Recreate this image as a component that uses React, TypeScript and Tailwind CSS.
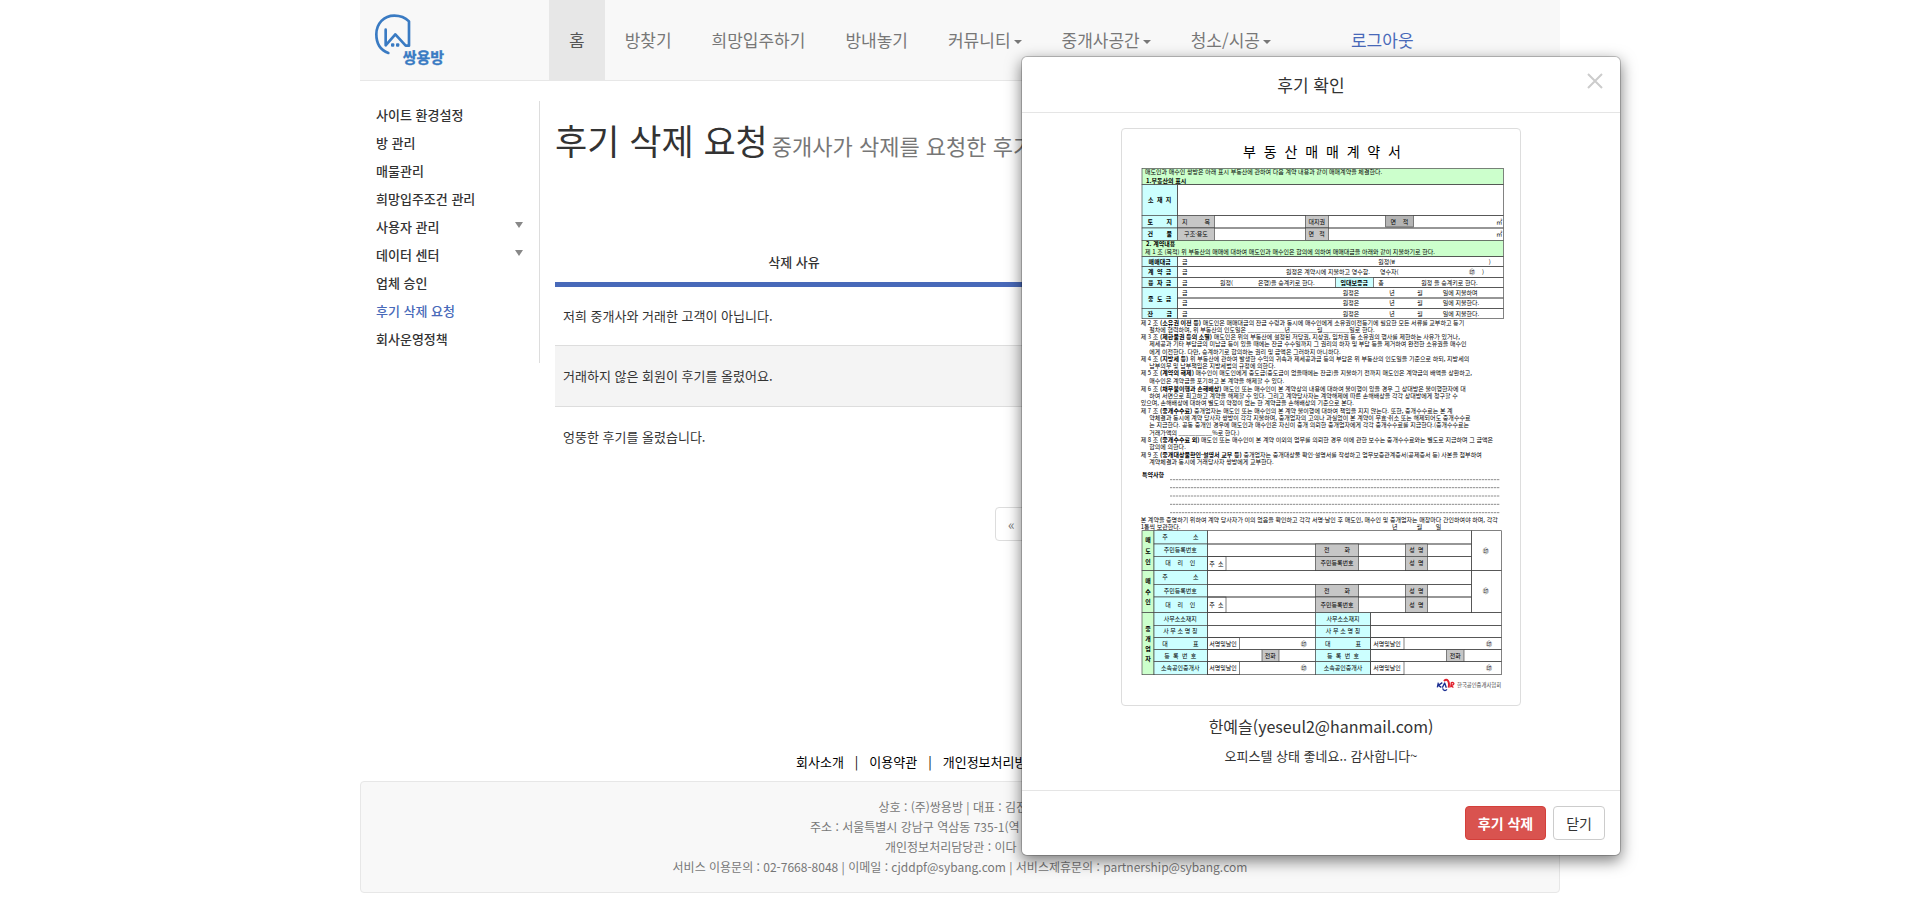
import React from "react";

type MenuEntry = { label: string; caret?: boolean; active?: boolean };

const NAV: MenuEntry[] = [
  { label: "홈", active: true },
  { label: "방찾기" },
  { label: "희망입주하기" },
  { label: "방내놓기" },
  { label: "커뮤니티", caret: true },
  { label: "중개사공간", caret: true },
  { label: "청소/시공", caret: true },
];

const SIDE: MenuEntry[] = [
  { label: "사이트 환경설정" },
  { label: "방 관리" },
  { label: "매물관리" },
  { label: "희망입주조건 관리" },
  { label: "사용자 관리", caret: true },
  { label: "데이터 센터", caret: true },
  { label: "업체 승인" },
  { label: "후기 삭제 요청", active: true },
  { label: "회사운영정책" },
];

const REASONS = [
  "저희 중개사와 거래한 고객이 아닙니다.",
  "거래하지 않은 회원이 후기를 올렸어요.",
  "엉뚱한 후기를 올렸습니다.",
];

function Logo() {
  return (
    <svg viewBox="45 43 213 171" className="block h-[57px] w-[71px]" role="img" aria-label="쌍용방">
      <g fill="none" stroke="#3a7bc3" strokeWidth="8" strokeLinecap="round" strokeLinejoin="round">
        <path d="M85 160C62 152 49 132 49 104C49 71 72 48 103 48C121 48 136 54 147 65V138H137L106 104L77 137V90" />
      </g>
      <g fill="#3a7bc3">
        <rect x="93" y="131" width="10" height="10" rx="3" />
        <rect x="108" y="131" width="10" height="10" rx="3" />
        <text x="128" y="189" fontSize="45" fontWeight="700" stroke="#3a7bc3" strokeWidth="1">쌍용방</text>
      </g>
    </svg>
  );
}

/* ---------- contract drawing ---------- */

const GREEN = "#ccffcc";
const CYAN = "#ccffff";
const GRAY = "#c6c6c6";

type Box = [number, number, number, number, string];

const BOXES: Box[] = [
  [66, 130, 1150, 179, GREEN],
  [66, 179, 172, 271, CYAN],
  [172, 179, 1150, 271, "none"],
  [66, 271, 172, 309, CYAN],
  [172, 271, 1150, 309, "none"],
  [172, 271, 283, 309, GRAY],
  [556, 271, 625, 309, GRAY],
  [797, 271, 880, 306, "#b4b4b4"],
  [66, 309, 172, 346, CYAN],
  [172, 309, 1150, 346, "none"],
  [172, 309, 283, 346, GRAY],
  [556, 309, 625, 346, GRAY],
  [66, 346, 1150, 395, GREEN],
  [66, 395, 172, 425, CYAN],
  [172, 395, 1150, 425, "none"],
  [66, 425, 172, 457, CYAN],
  [172, 425, 1150, 457, "none"],
  [66, 457, 172, 488, CYAN],
  [172, 457, 1150, 488, "none"],
  [647, 457, 760, 488, CYAN],
  [66, 488, 172, 550, CYAN],
  [172, 488, 1150, 519, "none"],
  [172, 519, 1150, 550, "none"],
  [66, 550, 172, 581, CYAN],
  [172, 550, 1150, 581, "none"],
  [66, 1217, 102, 1337, GREEN],
  [66, 1337, 102, 1463, GREEN],
  [66, 1463, 102, 1649, GREEN],
  [1054, 1217, 1144, 1337, "none"],
  [1054, 1337, 1144, 1463, "none"],
];

for (const ys of [[1217, 1257, 1294, 1337], [1337, 1378, 1416, 1463]]) {
  for (let i = 0; i < 3; i++) {
    BOXES.push([102, ys[i], 262, ys[i + 1], CYAN], [262, ys[i], 1054, ys[i + 1], "none"]);
    if (i > 0) {
      BOXES.push([586, ys[i], 716, ys[i + 1], GRAY], [856, ys[i], 922, ys[i + 1], GRAY]);
    }
  }
  BOXES.push([262, ys[2], 318, ys[3], "none"]);
}

const AGENT_ROWS = [1463, 1501, 1538, 1574, 1610, 1649];
for (let i = 0; i < 5; i++) {
  const a = AGENT_ROWS[i];
  const b = AGENT_ROWS[i + 1];
  BOXES.push([102, a, 262, b, CYAN], [262, a, 586, b, "none"], [586, a, 752, b, CYAN], [752, a, 1144, b, "none"]);
  if (i === 2 || i === 4) BOXES.push([262, a, 358, b, "none"], [752, a, 852, b, "none"]);
  if (i === 3) BOXES.push([426, a, 477, b, GRAY], [980, a, 1032, b, GRAY]);
}

/* x, vertical centre, text */
type Note = [number, number, string];

const BOLD_CENTER: Note[] = [
  [119, 225, "소  재  지"],
  [119, 290, "토        지"],
  [119, 327, "건        물"],
  [119, 410, "매매대금"],
  [119, 441, "계  약  금"],
  [119, 473, "융  자  금"],
  [119, 520, "중  도  금"],
  [119, 566, "잔        금"],
  [703, 473, "임대보증금"],
  [84, 1245, "매"], [84, 1277, "도"], [84, 1310, "인"],
  [84, 1367, "매"], [84, 1400, "수"], [84, 1431, "인"],
  [84, 1510, "중"], [84, 1540, "개"], [84, 1571, "업"], [84, 1602, "자"],
];

const CENTER: Note[] = [
  [228, 290, "지          목"],
  [228, 327, "구조·용도"],
  [590, 290, "대지권"],
  [590, 327, "면   적"],
  [838, 290, "면    적"],
  [1138, 290, "㎡"],
  [1138, 327, "㎡"],
  [181, 1237, "주               소"],
  [181, 1276, "주민등록번호"],
  [181, 1315, "대    리    인"],
  [289, 1316, "주  소"],
  [651, 1276, "전         화"],
  [651, 1315, "주민등록번호"],
  [889, 1276, "성  명"],
  [889, 1315, "성  명"],
  [1097, 1277, "㊞"],
  [181, 1357, "주               소"],
  [181, 1398, "주민등록번호"],
  [181, 1440, "대    리    인"],
  [289, 1440, "주  소"],
  [651, 1398, "전         화"],
  [651, 1440, "주민등록번호"],
  [889, 1398, "성  명"],
  [889, 1440, "성  명"],
  [1097, 1399, "㊞"],
];
for (const [x, sign, stamp, tel] of [[181, 309, 551, 451], [669, 801, 1107, 1006]]) {
  CENTER.push(
    [x, 1482, "사무소소재지"],
    [x, 1519, "사 무 소 명 칭"],
    [x, 1556, "대               표"],
    [x, 1593, "등  록  번  호"],
    [x, 1629, "소속공인중개사"],
    [sign, 1557, "서명및날인"],
    [sign, 1630, "서명및날인"],
    [stamp, 1556, "㊞"],
    [stamp, 1629, "㊞"],
    [tel, 1593, "전화"],
  );
}

const LEFT: Note[] = [
  [75, 142, "매도인과 매수인 쌍방은 아래 표시 부동산에 관하여 다음 계약 내용과 같이 매매계약을 체결한다."],
  [75, 382, "제 1 조 (목적) 위 부동산의 매매에 대하여 매도인과 매수인은 합의에 의하여 매매대금을 아래와 같이 지불하기로 한다."],
  [186, 410, "금"], [775, 410, "원정(₩"], [1106, 410, ")"],
  [186, 441, "금"], [498, 441, "원정은 계약시에 지불하고 영수함."], [780, 441, "영수자("], [1047, 441, "㊞"], [1086, 441, ")"],
  [186, 473, "금"], [300, 473, "원정("], [414, 473, "은행)을 승계키로 한다."], [775, 473, "총"], [904, 473, "원정 을 승계키로 한다."],
  [186, 503, "금"], [668, 503, "원정은"], [808, 503, "년"], [892, 503, "월"], [968, 503, "일에 지불하며"],
  [186, 535, "금"], [668, 535, "원정은"], [808, 535, "년"], [892, 535, "월"], [968, 535, "일에 지불한다."],
  [186, 566, "금"], [668, 566, "원정은"], [808, 566, "년"], [892, 566, "월"], [968, 566, "일에 지불한다."],
  [88, 614, "절차에 협력하며, 위 부동산의 인도일은 ___________년________월________일로 한다."],
  [88, 658, "제세공과 기타 부담금의 미납금 등이 있을 때에는 잔금 수수일까지 그 권리의 하자 및 부담 등을 제거하여 완전한 소유권을 매수인"],
  [88, 680, "에게 이전한다. 다만, 승계하기로 합의하는 권리 및 금액은 그러하지 아니하다."],
  [88, 723, "납부의무 및 납부책임은 지방세법의 규정에 의한다."],
  [88, 768, "매수인은 계약금을 포기하고 본 계약을 해제할 수 있다."],
  [88, 813, "하여 서면으로 최고하고 계약을 해제할 수 있다. 그리고 계약당사자는 계약해제에 따른 손해배상을 각각 상대방에게 청구할 수"],
  [62, 835, "있으며, 손해배상에 대하여 별도의 약정이 없는 한 계약금을 손해배상의 기준으로 본다."],
  [88, 879, "약체결과 동시에 계약 당사자 쌍방이 각각 지불하며, 중개업자의 고의나 과실없이 본 계약이 무효·취소 또는 해제되어도 중개수수료"],
  [88, 901, "는 지급한다. 공동 중개인 경우에 매도인과 매수인은 자신이 중개 의뢰한 중개업자에게 각각 중개수수료를 지급한다.(중개수수료는"],
  [88, 923, "거래가액의 __________%로 한다.)"],
  [88, 967, "합의에 의한다."],
  [88, 1011, "계약체결과 동시에 거래당사자 쌍방에게 교부한다."],
  [62, 1186, "본 계약을 증명하기 위하여 계약 당사자가 이의 없음을 확인하고 각각 서명·날인 후 매도인, 매수인 및 중개업자는 매장마다 간인하여야 하며, 각각"],
  [62, 1206, "1통씩 보관한다."],
  [816, 1206, "년"], [890, 1206, "월"], [947, 1206, "일"],
];

/* vertical centre, number, clause title, body */
const CLAUSES: [number, string, string, string][] = [
  [593, "제 2 조 ", "(소유권 이전 등)", " 매도인은 매매대금의 잔금 수령과 동시에 매수인에게 소유권이전등기에 필요한 모든 서류를 교부하고 등기"],
  [635, "제 3 조 ", "(제한물권 등의 소멸)", " 매도인은 위의 부동산에 설정된 저당권, 지상권, 임차권 등 소유권의 행사를 제한하는 사유가 있거나,"],
  [703, "제 4 조 ", "(지방세 등)", " 위 부동산에 관하여 발생한 수익의 귀속과 제세공과금 등의 부담은 위 부동산의 인도일을 기준으로 하되, 지방세의"],
  [745, "제 5 조 ", "(계약의 해제)", " 매수인이 매도인에게 중도금(중도금이 없을때에는 잔금)을 지불하기 전까지 매도인은 계약금의 배액을 상환하고,"],
  [791, "제 6 조 ", "(채무불이행과 손해배상)", " 매도인 또는 매수인이 본 계약상의 내용에 대하여 불이행이 있을 경우 그 상대방은 불이행한자에 대"],
  [857, "제 7 조 ", "(중개수수료)", " 중개업자는 매도인 또는 매수인의 본 계약 불이행에 대하여 책임을 지지 않는다. 또한, 중개수수료는 본 계"],
  [945, "제 8 조 ", "(중개수수료 외)", " 매도인 또는 매수인이 본 계약 이외의 업무를 의뢰한 경우 이에 관한 보수는 중개수수료와는 별도로 지급하며 그 금액은"],
  [989, "제 9 조 ", "(중개대상물확인·설명서 교부 등)", " 중개업자는 중개대상물 확인·설명서를 작성하고 업무보증관계증서(공제증서 등) 사본을 첨부하여"],
];

const RULES = [1064, 1088, 1113, 1138, 1163];

function Contract() {
  return (
    <svg
      viewBox="18 24 1170 1704"
      className="block h-auto w-full"
      role="img"
      aria-label="부동산매매계약서"
      fontSize="18"
      fill="#000"
    >
      <text x="606" y="96" fontSize="42" textAnchor="middle" className="whitespace-pre">
        {"부  동  산  매  매  계  약  서"}
      </text>
      {BOXES.map(([x1, y1, x2, y2, fill], i) => (
        <rect key={i} x={x1} y={y1} width={x2 - x1} height={y2 - y1} fill={fill} stroke="#444" strokeWidth="2" />
      ))}
      {BOLD_CENTER.map(([x, y, t], i) => (
        <text key={i} x={x} y={y + 7} fontWeight="700" textAnchor="middle" className="whitespace-pre">{t}</text>
      ))}
      {CENTER.map(([x, y, t], i) => (
        <text key={i} x={x} y={y + 6} textAnchor="middle" className="whitespace-pre">{t}</text>
      ))}
      {LEFT.map(([x, y, t], i) => (
        <text key={i} x={x} y={y + 6} className="whitespace-pre">{t}</text>
      ))}
      {CLAUSES.map(([y, no, title, body]) => (
        <text key={y} x="62" y={y + 6} className="whitespace-pre">
          {no}
          <tspan fontWeight="700">{title}</tspan>
          {body}
        </text>
      ))}
      <g fontWeight="700">
        <text x="78" y="174">1.부동산의 표시</text>
        <text x="78" y="364">2. 계약내용</text>
        <text x="66" y="1056">특약사항</text>
      </g>
      {RULES.map((y) => (
        <path key={y} d={`M150 ${y}H1140`} stroke="#555" strokeWidth="2" strokeDasharray="7 2" />
      ))}
      <g fill="none" strokeLinejoin="round">
        <path d="M955 1673L952 1687M967 1673L955 1681L964 1687" stroke="#1c2f92" strokeWidth="4" />
        <path d="M967 1688L974 1674L979 1688M968 1690C970 1697 976 1699 981 1693" stroke="#1c2f92" strokeWidth="4" />
        <path d="M972 1668C980 1659 990 1667 986 1688" stroke="#e0202c" strokeWidth="6" />
        <path d="M992 1687L994 1673C1000 1671 1004 1675 1000 1679L994 1681L1000 1688" stroke="#e0202c" strokeWidth="4" />
      </g>
      <text x="1011" y="1687" fontSize="16" fill="#444">한국공인중개사협회</text>
    </svg>
  );
}

/* ---------- page ---------- */

function Header() {
  return (
    <header className="flex h-[81px] border-b border-[#e7e7e7] bg-[#f8f8f8]">
      <a href="#home" className="w-[189px] shrink-0 pt-[14px] pl-[15px]">
        <Logo />
      </a>
      <nav className="flex text-[17px] leading-5 text-[#777]">
        {NAV.map((n) => (
          <a
            key={n.label}
            href="#menu"
            className={
              n.active
                ? "flex items-center bg-[#e7e7e7] px-5 text-[#555]"
                : "flex items-center px-5"
            }
          >
            {n.label}
            {n.caret && (
              <svg viewBox="0 0 8 4" className="mt-1 ml-[3px] h-1 w-2" fill="#777" aria-hidden="true">
                <path d="M0 0H8L4 4Z" />
              </svg>
            )}
          </a>
        ))}
        <a href="#logout" className="ml-10 flex items-center px-5 text-[#4869b9]">로그아웃</a>
      </nav>
    </header>
  );
}

function Sidebar() {
  return (
    <aside className="h-[262px] w-[180px] shrink-0 border-r border-[#ddd] pl-4">
      <ul className="text-[13px] font-medium leading-7 text-[#333]">
        {SIDE.map((s) => (
          <li key={s.label}>
            <a href="#side" className={s.active ? "block text-[#4869b9]" : "flex items-center justify-between pr-4"}>
              {s.label}
              {s.caret && (
                <svg viewBox="0 0 8 6" className="mb-1 h-1.5 w-2" fill="#888" aria-hidden="true">
                  <path d="M0 0H8L4 6Z" />
                </svg>
              )}
            </a>
          </li>
        ))}
      </ul>
    </aside>
  );
}

function Reasons() {
  return (
    <main className="min-w-0 grow px-[15px] pt-[18px]">
      <h1 className="flex items-baseline gap-1 text-[35px] leading-[42px] whitespace-nowrap text-[#333]">
        후기 삭제 요청
        <small className="text-[22px] text-[#777]">중개사가 삭제를 요청한 후기</small>
      </h1>
      <table className="mt-20 w-full text-[13px] text-[#333]">
        <thead>
          <tr className="border-b-[5px] border-[#4869b9]">
            <th className="h-[38px] w-[478px] pb-1 font-medium">삭제 사유</th>
            <td />
          </tr>
        </thead>
        <tbody>
          {REASONS.map((r) => (
            <tr key={r} className="h-[61px] border-[#ddd] not-last:border-b even:bg-[#f4f4f4]">
              <td className="px-2">{r}</td>
              <td />
            </tr>
          ))}
        </tbody>
      </table>
      <div className="mx-auto mt-10 w-[110px]">
        <button type="button" aria-label="이전" className="h-[34px] rounded-l border border-[#ddd] bg-white px-3 text-sm text-[#777]">
          «
        </button>
      </div>
    </main>
  );
}

function Footer() {
  return (
    <footer>
      <div className="mx-auto flex w-[328px] gap-[11px] text-[13px] leading-5 whitespace-nowrap text-black">
        <a href="#about">회사소개</a>
        <span>|</span>
        <a href="#terms">이용약관</a>
        <span>|</span>
        <a href="#privacy">개인정보처리방</a>
      </div>
      <address className="mt-[9px] flex flex-col items-center rounded border border-[#e7e7e7] bg-[#f8f8f8] px-4 py-[15px] text-xs leading-5 whitespace-nowrap text-[#777] not-italic">
        <p className="w-[163px]">상호 : (주)쌍용방 | 대표 : 김진</p>
        <p className="w-[300px]">주소 : 서울특별시 강남구 역삼동 735-1(역</p>
        <p className="w-[150px]">개인정보처리담당관 : 이다</p>
        <p>서비스 이용문의 : 02-7668-8048 | 이메일 : cjddpf@sybang.com | 서비스제휴문의 : partnership@sybang.com</p>
      </address>
    </footer>
  );
}

function ReviewDialog() {
  return (
    <section
      role="dialog"
      aria-labelledby="review-title"
      className="absolute top-14 left-[661px] w-[600px] rounded-md border border-black/20 bg-white bg-clip-padding text-center text-[#333] shadow-[0_5px_15px_rgba(0,0,0,0.5)]"
    >
      <div className="flex border-b border-[#e5e5e5] p-[15px]">
        <h2 id="review-title" className="grow text-[17px] leading-[25px]">후기 확인</h2>
        <button type="button" aria-label="닫기" className="flex w-5 justify-center">
          <svg viewBox="0 0 16 18" className="h-[18px] w-4" fill="none" stroke="#ccc" strokeWidth="2" aria-hidden="true">
            <path d="M1 2L15 16M15 2L1 16" />
          </svg>
        </button>
      </div>
      <div className="px-[15px] pt-[15px] pb-6">
        <div className="mx-auto w-[400px] rounded border border-[#ddd] p-1">
          <Contract />
        </div>
        <p className="mt-2.5 text-base leading-5">한예슬(yeseul2@hanmail.com)</p>
        <p className="mt-2.5 text-[13px] leading-5">오피스텔 상태 좋네요.. 감사합니다~</p>
      </div>
      <div className="flex justify-end gap-[7px] border-t border-[#e5e5e5] p-[15px] text-sm leading-5">
        <button type="button" className="h-[34px] rounded border border-[#d43f3a] bg-[#d9534f] px-3 font-bold text-white">
          후기 삭제
        </button>
        <button type="button" className="h-[34px] rounded border border-[#ccc] bg-white px-3">닫기</button>
      </div>
    </section>
  );
}

export default function App() {
  return (
    <div className="min-h-screen bg-white font-['Noto_Sans_CJK_KR','Noto_Sans',sans-serif]" lang="ko">
      <div className="relative mx-auto max-w-[1200px]">
        <Header />
        <div className="flex min-h-[671px] pt-5">
          <Sidebar />
          <Reasons />
        </div>
        <Footer />
        <ReviewDialog />
      </div>
    </div>
  );
}
